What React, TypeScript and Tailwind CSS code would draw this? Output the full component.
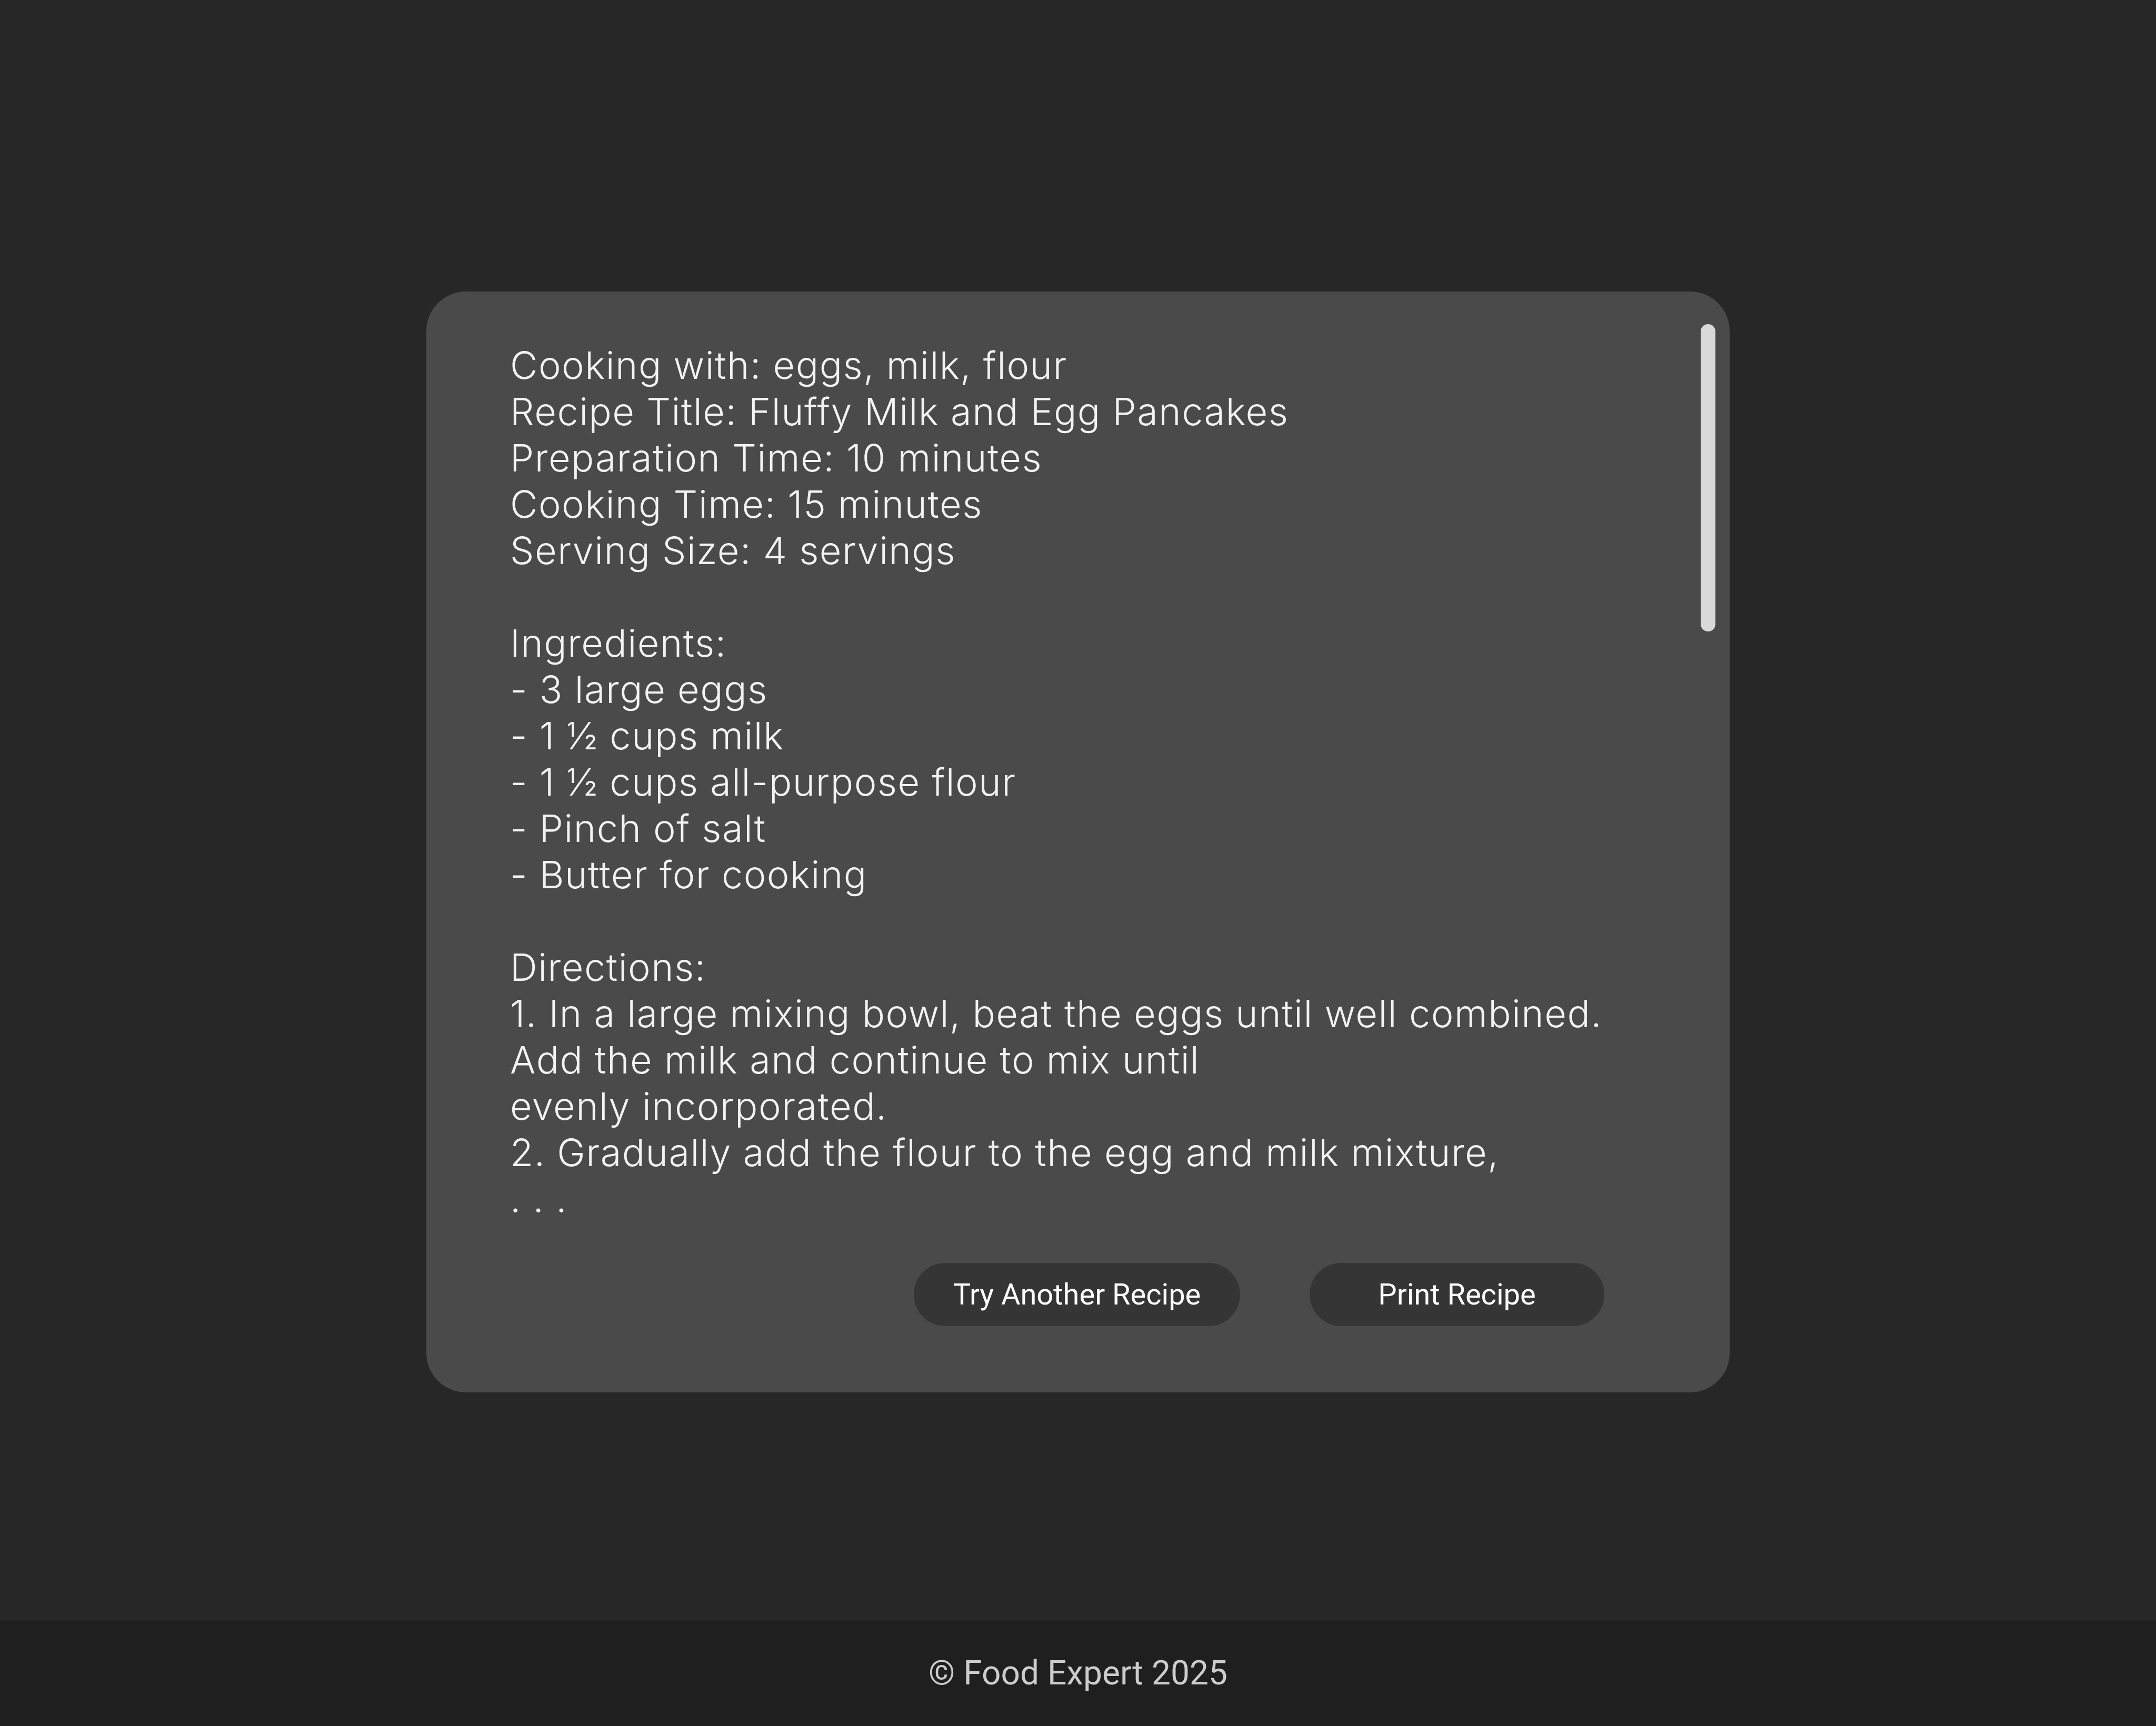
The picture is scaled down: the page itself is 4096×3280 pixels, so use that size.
import React from "react";

const recipe = `Cooking with: eggs, milk, flour
Recipe Title: Fluffy Milk and Egg Pancakes
Preparation Time: 10 minutes
Cooking Time: 15 minutes
Serving Size: 4 servings

Ingredients:
- 3 large eggs
- 1 ½ cups milk
- 1 ½ cups all-purpose flour
- Pinch of salt
- Butter for cooking

Directions:
1. In a large mixing bowl, beat the eggs until well combined.
Add the milk and continue to mix until
evenly incorporated.
2. Gradually add the flour to the egg and milk mixture,
. . .`;

export default function App() {
  return (
    <div className="min-h-[3280px] flex flex-col bg-[#272727]">
      <main className="flex-1 flex items-center justify-center pt-[120px]">
        <div className="relative w-[2476px] h-[2092px] bg-[#4a4a4a] rounded-[75px] pl-[159px] pt-[96px] flex flex-col">
          <div
            className="whitespace-pre text-[72px] leading-[88px] font-light tracking-[1.5px] text-[#f2f2f2]"
            style={{ fontFamily: "Inter, 'Open Sans', sans-serif" }}
          >
            {recipe}
          </div>
          <div className="flex justify-end gap-[132px] pr-[238px] mt-[78px]">
            <button
              className="w-[620px] h-[120px] rounded-full bg-[#353535] text-white text-[56px]"
              style={{ fontFamily: "Roboto, sans-serif" }}
            >
              Try Another Recipe
            </button>
            <button
              className="w-[560px] h-[120px] rounded-full bg-[#353535] text-white text-[56px]"
              style={{ fontFamily: "Roboto, sans-serif" }}
            >
              Print Recipe
            </button>
          </div>
          <div className="absolute right-[27px] top-[62px] w-[28px] h-[584px] rounded-full bg-[#d9d9d9]" />
        </div>
      </main>
      <footer
        className="h-[200px] bg-[#1f1f1f] flex items-center justify-center text-[64px] text-[#cccccc]"
        style={{ fontFamily: "Roboto, sans-serif" }}
      >
        © Food Expert 2025
      </footer>
    </div>
  );
}
